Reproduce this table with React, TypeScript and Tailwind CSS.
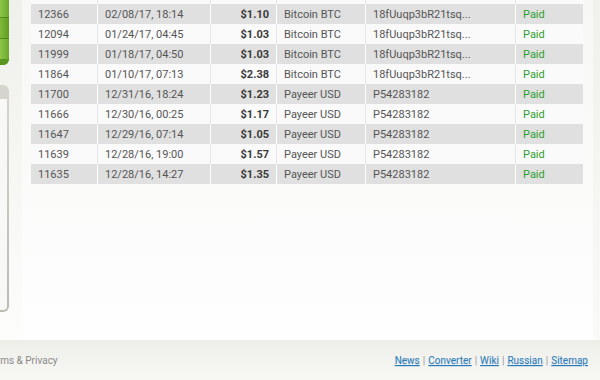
import React from "react";

interface Payout {
  id: string;
  date: string;
  amount: string;
  method: string;
  account: string;
}

const payouts: Payout[] = [
  { id: "12366", date: "02/08/17, 18:14", amount: "$1.10", method: "Bitcoin BTC", account: "18fUuqp3bR21tsq..." },
  { id: "12094", date: "01/24/17, 04:45", amount: "$1.03", method: "Bitcoin BTC", account: "18fUuqp3bR21tsq..." },
  { id: "11999", date: "01/18/17, 04:50", amount: "$1.03", method: "Bitcoin BTC", account: "18fUuqp3bR21tsq..." },
  { id: "11864", date: "01/10/17, 07:13", amount: "$2.38", method: "Bitcoin BTC", account: "18fUuqp3bR21tsq..." },
  { id: "11700", date: "12/31/16, 18:24", amount: "$1.23", method: "Payeer USD", account: "P54283182" },
  { id: "11666", date: "12/30/16, 00:25", amount: "$1.17", method: "Payeer USD", account: "P54283182" },
  { id: "11647", date: "12/29/16, 07:14", amount: "$1.05", method: "Payeer USD", account: "P54283182" },
  { id: "11639", date: "12/28/16, 19:00", amount: "$1.57", method: "Payeer USD", account: "P54283182" },
  { id: "11635", date: "12/28/16, 14:27", amount: "$1.35", method: "Payeer USD", account: "P54283182" },
];

const cols = "grid grid-cols-[66px_113px_66px_89px_150px_68px]";

function PayoutRow({ row, shaded }: { row: Payout; shaded: boolean }) {
  const cell = shaded
    ? "bg-[#e0e0e0] border-white"
    : "bg-[#fafafa] border-[#e6e6e6]";
  return (
    <div className={`${cols} h-[20px] pt-px leading-[19px]`}>
      <div className={`${cell} -mt-px pt-px px-[7px]`}>{row.id}</div>
      <div className={`${cell} -mt-px pt-px border-l px-[7px]`}>{row.date}</div>
      <div className={`${cell} -mt-px pt-px border-l px-[7px] text-right font-bold text-[#3a3a3a]`}>{row.amount}</div>
      <div className={`${cell} -mt-px pt-px border-l px-[7px]`}>{row.method}</div>
      <div className={`${cell} -mt-px pt-px border-l px-[7px]`}>{row.account}</div>
      <div className={`${cell} -mt-px pt-px border-l px-[7px] text-[#2f9e2f]`}>Paid</div>
    </div>
  );
}

function Sidebar() {
  return (
    <div className="flex w-[22px] shrink-0 flex-col gap-[20px] bg-gradient-to-b from-[#efefeb] via-[#f6f6f3] to-[#fdfdfc]">
      <div className="flex h-[65px] w-[9px] flex-col overflow-hidden rounded-br-[6px] bg-[#5e9c22]">
        <div className="h-[17px] bg-gradient-to-r from-[#8dc548] to-[#6aa92c]" />
        <div className="h-px bg-[#4f8a1a]" />
        <div className="h-[20px] bg-gradient-to-r from-[#7fbb3a] to-[#5f9d22]" />
        <div className="h-px bg-[#4f8a1a]" />
        <div className="h-[20px] bg-gradient-to-r from-[#8dc548] to-[#6aa92c]" />
        <div className="flex-1 bg-[#5a961f]" />
      </div>
      <div className="flex h-[227px] w-[9px] flex-col overflow-hidden rounded-r-[6px] bg-gradient-to-b from-[#d6d6cf] to-[#bbbbb2] pr-[2px] pb-[2px]">
        <div className="h-[14px]" />
        <div className="flex-1 rounded-br-[4px] bg-[#f8f8f6]" />
      </div>
    </div>
  );
}

const linkClass = "text-[#2b7bb9] underline [text-shadow:0_1px_1px_rgba(43,123,185,0.2)]";

export default function App() {
  return (
    <div className="flex h-[380px] w-[600px] flex-col overflow-hidden bg-white font-['Roboto','Liberation_Sans',sans-serif] text-[11px] text-[#555]">
      <div className="flex h-[340px]">
        <Sidebar />
        <div className="flex-1 bg-gradient-to-b from-[#f7f7f5] to-[#fefefe] pl-[9px] pr-[10px]">
          <div className={`${cols} h-[4px]`}>
            <div className="bg-[#fafafa]" />
            <div className="border-l border-[#e6e6e6] bg-[#fafafa]" />
            <div className="border-l border-[#e6e6e6] bg-[#fafafa]" />
            <div className="border-l border-[#e6e6e6] bg-[#fafafa]" />
            <div className="border-l border-[#e6e6e6] bg-[#fafafa]" />
            <div className="border-l border-[#e6e6e6] bg-[#fafafa]" />
          </div>
          {payouts.map((row, i) => (
            <PayoutRow key={row.id} row={row} shaded={i % 2 === 0} />
          ))}
        </div>
        <div className="w-[7px] shrink-0 bg-gradient-to-b from-[#f0f0ec] to-[#fafaf8]" />
      </div>
      <footer className="flex flex-1 items-center justify-between bg-gradient-to-b from-[#eeeee9] to-[#f8f8f5] pr-[12px] text-[10px]">
        <span className="-ml-[14px] text-[#8a8a8a]">Terms &amp; Privacy</span>
        <nav className="flex items-center gap-[3px] text-[#999]">
          <a href="#" className={linkClass}>News</a>
          <span>|</span>
          <a href="#" className={linkClass}>Converter</a>
          <span>|</span>
          <a href="#" className={linkClass}>Wiki</a>
          <span>|</span>
          <a href="#" className={linkClass}>Russian</a>
          <span>|</span>
          <a href="#" className={linkClass}>Sitemap</a>
        </nav>
      </footer>
    </div>
  );
}
